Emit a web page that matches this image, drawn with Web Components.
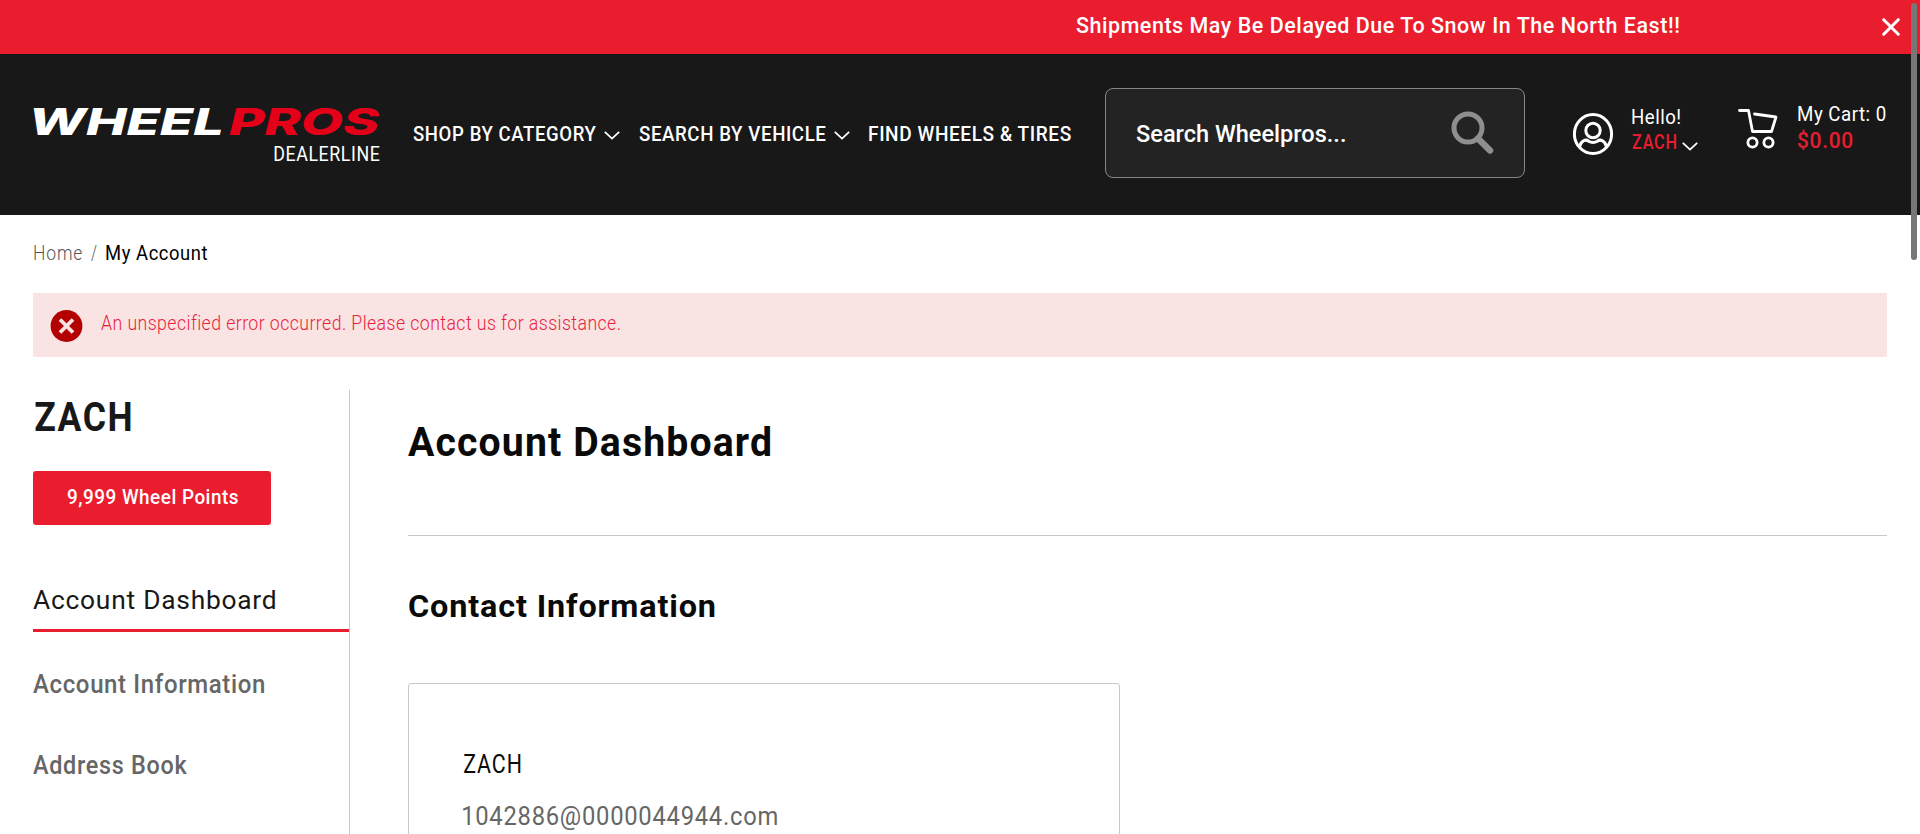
<!DOCTYPE html>
<html lang="en">
<head>
<meta charset="utf-8">
<title>My Account</title>
<style>
html,body{margin:0;height:100%;overflow:hidden;background:#fff}
body{font-family:Roboto,"Liberation Sans",sans-serif;color:#181818}
</style>
</head>
<body>
<wp-app></wp-app>
<script>
const make=(name,html,ready)=>customElements.define(name,class extends HTMLElement{
  connectedCallback(){
    if(this.shadowRoot)return;
    const t=document.createElement('template');t.innerHTML=html;
    this.attachShadow({mode:'open'}).append(t.content.cloneNode(true));
    if(ready)ready(this,this.shadowRoot);
  }
});
const ctx=document.createElement('canvas').getContext('2d');

/* One line of text whose ink fills the "w" width: glyphs are condensed or
   widened, and unless "solid" is set a little of the width goes to tracking. */
make('wp-line',`<style>
:host{display:block;flex:none;white-space:nowrap}
span{display:inline-block;transform-origin:0 50%;vertical-align:top}
</style><span><slot></slot></span>`,(el,root)=>{
  const w=+el.getAttribute('w'),s=getComputedStyle(el),text=el.textContent;
  el.style.width=w+'px';
  ctx.font=`${s.fontStyle} ${s.fontWeight} ${s.fontSize} ${s.fontFamily}`;
  const m=ctx.measureText(text),ink=m.actualBoundingBoxLeft+m.actualBoundingBoxRight;
  let k=w/ink;
  const span=root.querySelector('span');
  if(!el.hasAttribute('solid')&&text.length>1){
    k*=.95;
    span.style.letterSpacing=(w/k-ink)/(text.length-1)+'px';
  }
  span.style.transform=`translateX(${m.actualBoundingBoxLeft*k}px) scaleX(${k})`;
});

make('wp-chevron',`<style>:host{display:block;flex:none;width:16px;height:9px}svg{display:block}</style>
<svg width="16" height="9" fill="none" stroke="#fff" stroke-width="1.8"><path d="M.8.8 8 7.6 15.2.8"/></svg>`);

make('wp-notice',`<style>
:host{display:flex;align-items:flex-start;justify-content:flex-end;height:54px;background:#ea1d2e;color:#fff;padding-right:20px;box-sizing:border-box}
wp-line{font-size:22px;font-weight:500;line-height:52px;margin-right:202px}
svg{display:block;margin-top:18px}
</style><wp-line w="604"><slot></slot></wp-line>
<svg width="18" height="18" stroke="#fff" stroke-width="3" stroke-linecap="round"><path d="M1.7 1.7 16.3 16.3M16.3 1.7 1.7 16.3"/></svg>`,
(el,root)=>{const l=root.querySelector('wp-line');l.replaceWith(Object.assign(l.cloneNode(),{textContent:el.textContent}))});

make('wp-logo',`<style>
:host{display:flex;flex-direction:column;align-items:flex-end;width:347px;margin-top:48px}
div{display:flex;justify-content:space-between;width:347px;font:italic 800 37px/40px Inter,Roboto,sans-serif}
.r{color:#e50019}
.d{font-size:21px;line-height:24px}
</style><div><wp-line solid w="188">WHEEL</wp-line><wp-line solid class="r" w="151">PROS</wp-line></div><wp-line class="d" w="106">DEALERLINE</wp-line>`);

make('wp-search',`<style>
:host{display:flex;justify-content:space-between;box-sizing:border-box;width:420px;height:90px;margin:34px 0 0 34px;padding:0 30px 0 30px;border:1px solid #868686;border-radius:8px;background:#232323}
wp-line{font-size:23px;font-weight:500;line-height:92px}
svg{display:block;margin-top:22px}
</style><wp-line solid w="209">Search Wheelpros...</wp-line>
<svg width="43" height="43" fill="none" stroke="#8f8f8f"><circle cx="17" cy="17" r="14" stroke-width="5"/><path d="M27 27.500 39 39.500" stroke-width="6.500" stroke-linecap="round"/></svg>`);

make('wp-account',`<style>
:host{display:flex;margin:56px 0 0 48px}
svg{display:block}
.t{margin:-3px 0 0 18px;font-size:20px;line-height:20px}
.n{display:flex;color:#ea1d2e;font-weight:500;gap:6px;margin-top:5px}
wp-chevron{margin-top:10px}
</style><svg width="41" height="46" fill="none" stroke="#fff" stroke-width="3"><ellipse cx="20" cy="24" rx="18.600" ry="19.500"/><circle cx="20" cy="20.500" r="7.200"/><path d="M6.500 37C7.500 31.500 12.500 28.500 15.500 31.200Q20 33.700 24.500 31.200C27.500 28.500 32.500 31.500 33.500 37"/></svg>
<div class="t"><wp-line w="48">Hello!</wp-line><div class="n"><wp-line w="44">ZACH</wp-line><wp-chevron></wp-chevron></div></div>`);

make('wp-cart',`<style>
:host{display:flex;margin:55px 0 0 40px}
svg{display:block}
.t{margin:-5px 0 0 20px;font-size:20px;line-height:20px}
.p{font-size:21.500px;font-weight:500;color:#ea1d2e;margin-top:7px}
</style><svg width="40" height="41" fill="none" stroke="#fff" stroke-width="2.800" stroke-linecap="round" stroke-linejoin="round"><path d="M1.500 1.500H10.500L14.500 22.500H33.500L38 8 16.500 5"/><circle cx="14.500" cy="33.500" r="4.600"/><circle cx="30.500" cy="33.500" r="4.600"/></svg>
<div class="t"><wp-line w="88">My Cart: 0</wp-line><wp-line class="p" w="55">$0.00</wp-line></div>`);

make('wp-header',`<style>
:host{display:flex;align-items:flex-start;height:161px;background:#181818;color:#fff;padding-left:33px;box-sizing:border-box}
nav{display:flex;margin:68px 0 0 33px;font-size:21px;font-weight:500;line-height:24px}
wp-chevron{margin:9px 19px 0 8px}
</style><wp-logo></wp-logo>
<nav><wp-line w="183">SHOP BY CATEGORY</wp-line><wp-chevron></wp-chevron><wp-line w="187">SEARCH BY VEHICLE</wp-line><wp-chevron></wp-chevron><wp-line w="202">FIND WHEELS &amp; TIRES</wp-line></nav>
<wp-search></wp-search><wp-account></wp-account><wp-cart></wp-cart>`);

make('wp-breadcrumb',`<style>
:host{display:flex;padding-left:34px;margin-top:26px;font-size:20px;line-height:24px;height:24px;color:#000}
.l{font-weight:300;color:#555}.s{margin:0 9px}
</style><wp-line class="l" w="48">Home</wp-line><wp-line class="l s" w="6">/</wp-line><wp-line w="101">My Account</wp-line>`);

make('wp-error',`<style>
:host{display:flex;box-sizing:border-box;height:64px;margin:28px 33px 0;padding-left:17px;background:#f9e4e3}
svg{display:block;margin:17px 18px 0 0}
wp-line{font-size:19.500px;font-weight:300;line-height:62px;color:#eb1d3e}
</style><svg width="33" height="32"><circle cx="16.500" cy="16" r="15.900" fill="#b30000"/><path d="M10 9.500 23 22.500M23 9.500 10 22.500" stroke="#f9e4e3" stroke-width="3.800"/></svg>
<wp-line w="519">An unspecified error occurred. Please contact us for assistance.</wp-line>`);

make('wp-sidebar',`<style>
:host{display:block;width:316px;border-right:1px solid #c8c8c8;color:#181818}
.n{font-size:41px;font-weight:700;line-height:48px;margin:3px 0 0 2px}
.b{display:flex;justify-content:center;width:238px;height:54px;margin-top:30px;border-radius:3px;background:#ea1d2e;color:#fff;font-size:20.500px;font-weight:500;line-height:53px}
.a,.i{font-size:26px;line-height:30px}
.a{margin-top:60px;padding-bottom:14px;border-bottom:3px solid #ea1d2e}
.i{margin-top:37px;color:#666;font-weight:500}
.i+.i{margin-top:51px}
</style><wp-line class="n" w="96">ZACH</wp-line><div class="b"><wp-line w="171">9,999 Wheel Points</wp-line></div>
<div class="a"><wp-line w="242">Account Dashboard</wp-line></div>
<div class="i"><wp-line w="231">Account Information</wp-line></div>
<div class="i"><wp-line w="154">Address Book</wp-line></div>`);

make('wp-dashboard',`<style>
:host{display:block;flex:1;margin:0 33px 0 58px;color:#0a0a0a}
.h{font-size:41px;font-weight:700;line-height:48px;margin:28px 0 0 0}
hr{margin:69px 0 0;border:0;height:1px;background:#c8c8c8}
.c{font-size:32px;font-weight:700;line-height:40px;margin:50px 0 0 1px}
.card{box-sizing:border-box;width:712px;height:220px;margin-top:57px;padding:64px 0 0 54px;border:1px solid #c8c8c8;border-radius:3px;font-size:25.500px;line-height:32px}
.m{margin-top:20px;color:#666}
.z{margin-left:1px}
</style><wp-line class="h" w="362">Account Dashboard</wp-line><hr><wp-line class="c" w="306">Contact Information</wp-line>
<div class="card"><wp-line class="z" w="57">ZACH</wp-line><wp-line class="m" w="314">1042886@0000044944.com</wp-line></div>`);

make('wp-app',`<style>
:host{display:block;height:834px;overflow:hidden;position:relative}
main{display:flex;height:444px;margin:33px 0 0 33px}
.bar{position:absolute;right:3px;top:3px;width:6px;height:257px;border-radius:3px;background:#777}
</style><wp-notice>Shipments May Be Delayed Due To Snow In The North East!!</wp-notice>
<wp-header></wp-header><wp-breadcrumb></wp-breadcrumb><wp-error></wp-error>
<main><wp-sidebar></wp-sidebar><wp-dashboard></wp-dashboard></main><div class="bar"></div>`);
</script>
</body>
</html>
